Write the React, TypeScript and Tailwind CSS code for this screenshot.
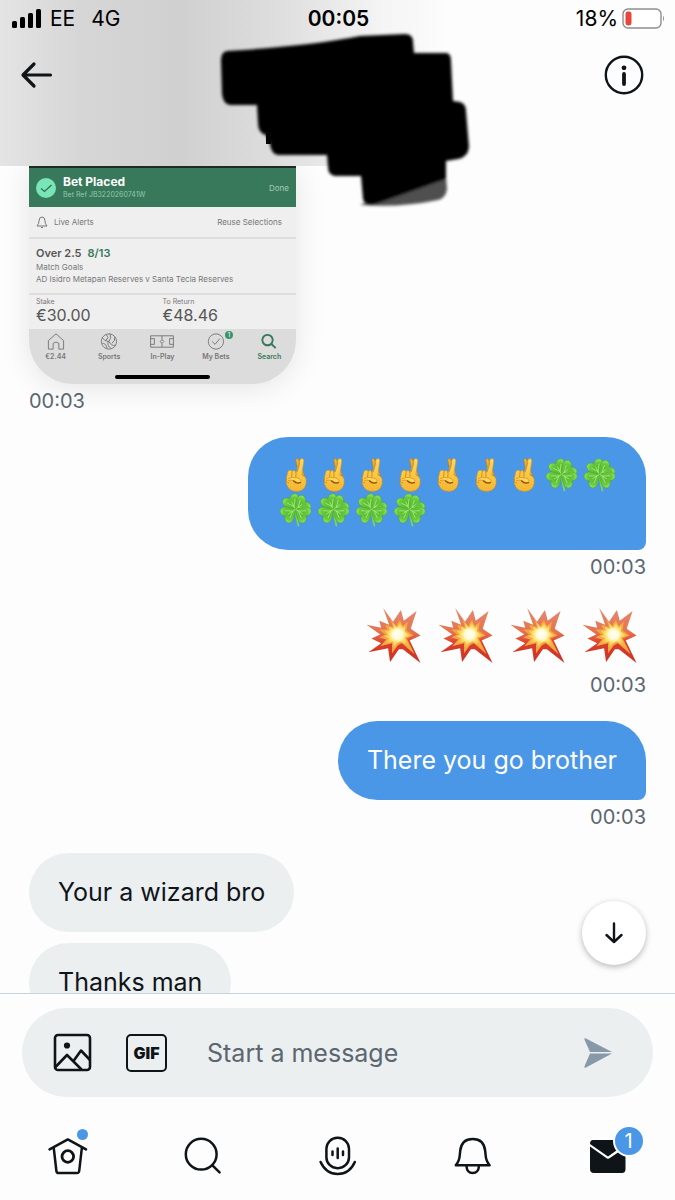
import React from 'react';

const CrossedFingers = () => (
  <svg viewBox="0 0 32 34" className="w-8 h-[34px]">
    <defs>
      <linearGradient id="skin" x1="0" y1="0" x2="0" y2="1">
        <stop offset="0" stopColor="#ffd95c" />
        <stop offset="1" stopColor="#f5b52e" />
      </linearGradient>
    </defs>
    <path d="M16.8 2.4 Q16.4 .8 17.8 .6 Q19.2 .4 19.8 2 L25.4 17 L20 18 Z" fill="#eeb033" stroke="#b87616" strokeWidth=".6" />
    <path d="M8.6 14.6 Q8.8 12.2 11 12.2 Q12.6 12 13.2 13 Q15.6 11.8 16.8 14 L17.6 13.4 L20.8 2.2 Q21.4 .4 23 .5 Q25.2 .8 24.8 3.2 L22.8 17 Q26.6 18 27.2 21.6 Q27.8 26.4 25.6 29.8 Q23 33.4 17.6 33.4 Q11.4 33.4 8.8 29 Q6.4 25.4 7.2 20.6 Z" fill="url(#skin)" stroke="#c98a22" strokeWidth=".5" />
    <path d="M7.4 21 Q6.4 24.6 9.6 24.8 M13.2 13 L12.6 19 M16.8 14 Q17.4 16 16.8 19 M20.8 4.6 Q19.6 10 18 14" fill="none" stroke="#c5821c" strokeWidth=".8" strokeLinecap="round" />
    <path d="M9.4 20.6 Q13 18.6 18 19.8 Q23 21 21.8 24.4 Q18.6 25.4 15 22.8 Q12 21.4 9.4 22.4" fill="#ffd55a" stroke="#c5821c" strokeWidth=".6" strokeLinecap="round" />
    <path d="M14.6 23 Q17.6 26 21.4 24.6" fill="none" stroke="#8f4f08" strokeWidth="1.3" strokeLinecap="round" />
  </svg>
);

const leaf = 'M0 0 C-3 -3 -8.4 -6 -7.6 -10.6 C-7 -14 -2.4 -14.4 0 -11 C2.4 -14.4 7 -14 7.6 -10.6 C8.4 -6 3 -3 0 0 Z';

const Clover = () => (
  <svg viewBox="0 0 32 34" className="w-8 h-[34px]">
    <defs>
      <radialGradient id="leafFill" cx=".5" cy=".55" r=".6">
        <stop offset="0" stopColor="#56b92f" />
        <stop offset=".65" stopColor="#68c93d" />
        <stop offset="1" stopColor="#8be05c" />
      </radialGradient>
    </defs>
    <path d="M16.6 16 Q17.6 26 19.4 32.6" fill="none" stroke="#7bd651" strokeWidth="1.8" strokeLinecap="round" />
    {[-28, 52, 122, 238].map((angle) => (
      <g key={angle} transform={`translate(16.6 16.4) rotate(${angle}) scale(1.1)`}>
        <path d={leaf} fill="url(#leafFill)" stroke="#4aa52b" strokeWidth=".5" />
        <path d="M0 0 V-8 M0 -3 L-4 -8.6 M0 -3 L4 -8.6" fill="none" stroke="#a9ea84" strokeWidth=".7" />
      </g>
    ))}
  </svg>
);

const Collision = () => (
  <svg viewBox="0 0 56 57" className="w-14 h-14">
    <defs>
      <linearGradient id="blast" x1="0" y1="0" x2="0" y2="1">
        <stop offset="0" stopColor="#e58a70" />
        <stop offset=".45" stopColor="#e5704e" />
        <stop offset=".65" stopColor="#d93f2b" />
        <stop offset="1" stopColor="#cd3024" />
      </linearGradient>
      <radialGradient id="core" cx=".52" cy=".48" r=".5">
        <stop offset="0" stopColor="#ffffff" />
        <stop offset=".35" stopColor="#fffbd8" />
        <stop offset=".6" stopColor="#fde16c" />
        <stop offset="1" stopColor="#f6b343" />
      </radialGradient>
    </defs>
    <path d="M17 0 L27 14 L35 2 L38 13 L51 3 L45 21 L55 28 L44 33 L55 56 L37 42 L33 42 L24 55 L22 41 L2 45 L15 36 L5 31 L14 27 L0 17 L15 20 L13 13 L23 17 Z" fill="url(#blast)" />
    <path d="M24 11 L30 18 L34 12 L37 18 L42 14 L41 23 L48 28 L41 31 L49 47 L36 36 L32 38 L26 46 L26 36 L14 39 L20 32 L13 30 L19 27 L13 22 L21 22 L19 17 L27 19 Z" fill="#f3a544" />
    <path d="M26 14 L31 20 L34 15 L37 20 L40 17 L39 24 L45 28 L39 30 L44 40 L35 34 L31 36 L28 41 L27 34 L18 37 L23 31 L17 29 L22 27 L18 23 L24 23 L22 19 L28 21 Z" fill="url(#core)" />
  </svg>
);

const Scribble = () => (
  <svg viewBox="0 0 264 180" className="w-[264px] h-[180px]">
    <defs>
      <filter id="soft" x="-5%" y="-5%" width="110%" height="110%">
        <feGaussianBlur stdDeviation="1.4" />
      </filter>
    </defs>
    <g filter="url(#soft)">
      <path d="M150 176 L235 136 L237 160 Q236 169 228 171 Q190 179 152 176 Z" fill="#505050" />
      <path d="M17 22 Q100 17 150 7 L195 5 Q203 5 203 13 L204 24 L237 24 Q241 25 241 32 L243 72 L250 73 Q256 75 256 82 L259 118 Q258 128 248 130 L236 132 L236 150 L166 175 Q155 178 153 170 L151 147 L125 147 Q118 146 118 138 L117 126 L68 126 Q61 125 60 115 L56 106 Q48 104 48 94 L47 76 L20 76 Q13 75 12 65 L11 31 Q11 23 17 22 Z" fill="#000" />
    </g>
    <path d="M56 103 h5 v12 h-5 Z" fill="#050505" />
  </svg>
);

const Header = () => (
  <header className="relative z-10 shrink-0 h-[166px] bg-[linear-gradient(90deg,#e3e4e3_0px,#d6d6d6_80px,#d0d0d0_180px,#dedede_280px,#f4f4f4_380px,#fdfdfd_450px)]">
    <div className="grid grid-cols-3 items-center h-[37px] pl-3 pr-[10px] text-[21px] leading-6 text-black">
      <div className="flex items-center gap-2">
        <svg viewBox="0 0 30 19" className="w-[30px] h-[19px]">
          <rect x="0" y="12" width="5" height="7" rx="1.5" />
          <rect x="8" y="8" width="5" height="11" rx="1.5" />
          <rect x="16" y="4" width="5" height="15" rx="1.5" />
          <rect x="24" y="0" width="5" height="19" rx="1.5" />
        </svg>
        <span>EE</span>
        <span className="ml-2">4G</span>
      </div>
      <span className="text-center font-semibold">00:05</span>
      <div className="flex items-center justify-end gap-1">
        <span>18%</span>
        <svg viewBox="0 0 43 21" className="w-[43px] h-[21px]" fill="none">
          <rect x="1" y="1" width="38" height="19" rx="5" fill="#fff" stroke="#8e8e90" strokeWidth="1.4" />
          <rect x="3.5" y="3.5" width="6" height="14" rx="2.4" fill="#e8453c" />
          <path d="M41 7.5 Q43 10.5 41 13.5 Z" fill="#8e8e90" />
        </svg>
      </div>
    </div>
    <div className="flex items-center justify-between h-[76px] pl-5 pr-[31px] text-[#0f1419]">
      <button aria-label="Back">
        <svg viewBox="0 0 34 28" className="w-[34px] h-7" fill="none" stroke="currentColor" strokeWidth="3.2" strokeLinecap="round" strokeLinejoin="round">
          <path d="M14 3 L3 14 L14 25 M3.5 14 H30.5" />
        </svg>
      </button>
      <button aria-label="Info">
        <svg viewBox="0 0 40 40" className="w-10 h-10" fill="none" stroke="currentColor" strokeLinecap="round">
          <circle cx="20" cy="20" r="18.2" strokeWidth="2.4" />
          <circle cx="20" cy="12.8" r="2.4" fill="currentColor" stroke="none" />
          <path d="M20 19 V29" strokeWidth="3.8" />
        </svg>
      </button>
    </div>
    <div className="absolute left-[210px] top-[29px]">
      <Scribble />
    </div>
  </header>
);

const betTabs = [
  {
    label: '€2.44',
    icon: <path d="M2 9 L10 2 L18 9 V18 H13 V12 Q10 9 7 12 V18 H2 Z" />,
  },
  {
    label: 'Sports',
    icon: <path d="M10 2 A8 8 0 1 1 9.9 2 Z M10 10 Q5 10 3 6 M10 10 Q13 6 11 2 M10 10 Q12 15 17 14 M7 3 Q11 6 6 9 M13 12 Q17 9 16 5 M9 10 Q8 15 12 17 M3 12 Q6 11 8 17" />,
  },
  {
    label: 'In-Play',
    wide: true,
    icon: <path d="M1 4 H25 V16 H1 Z M1 7 H5 V13 H1 M25 7 H21 V13 H25 M13 4 V8 M13 12 V16 M13 8 L15 10 L13 12 L11 10 Z" />,
  },
  {
    label: 'My Bets',
    badge: true,
    icon: <path d="M10 2 A8 8 0 1 1 9.9 2 Z M6 10 L9 13 L14 7" />,
  },
  {
    label: 'Search',
    active: true,
    icon: <path d="M8.5 3 A5.5 5.5 0 1 1 8.4 3 Z M12.5 12.5 L17 17" strokeWidth="2" />,
  },
];

const BetSlip = () => (
  <div className="w-[267px] overflow-hidden rounded-b-[44px] bg-[#efefef] text-[8px] leading-3 text-[#777] shadow-[0_4px_30px_rgba(0,0,0,0.10)]">
    <div className="flex items-center gap-[7px] h-[41px] px-[7px] border-t-2 border-[#1e2a24] bg-[#38795b]">
      <svg viewBox="0 0 20 20" className="w-5 h-5" fill="none">
        <circle cx="10" cy="10" r="10" fill="#78e5b6" />
        <path d="M5 10.5 L8.5 13.5 L15.5 7" stroke="#2f6d51" strokeWidth="1.3" />
      </svg>
      <div className="flex-1">
        <p className="text-[12px] leading-[14px] font-bold text-white">Bet Placed</p>
        <p className="text-[7px] text-[#93c8ae]">Bet Ref JB3220260741W</p>
      </div>
      <span className="text-[#a5cbb8]">Done</span>
    </div>
    <div className="flex items-center gap-[6px] h-8 pl-[7px] pr-[14px] border-b-2 border-[#dedede]">
      <svg viewBox="0 0 12 14" className="w-3 h-3.5" fill="none" stroke="#777">
        <path d="M1 11 Q3 9 3 6 Q3 2 6 2 Q9 2 9 6 Q9 9 11 11 Z M5 12.5 H7" />
      </svg>
      <span className="flex-1">Live Alerts</span>
      <span>Reuse Selections</span>
    </div>
    <div className="h-[54px] px-[7px] pt-[7px]">
      <p className="flex gap-[6px] text-[11px] leading-[14px] font-semibold text-[#555]">
        <span>Over 2.5</span>
        <span className="text-[#38795b]">8/13</span>
      </p>
      <p className="mt-px">Match Goals</p>
      <p>AD Isidro Metapan Reserves v Santa Tecla Reserves</p>
    </div>
    <div className="grid grid-cols-2 h-9 px-[7px] pt-[3px] border-t-2 border-[#dedede]">
      <div>
        <p className="text-[7px] leading-2">Stake</p>
        <p className="text-[16px] leading-[18px] text-[#555]">€30.00</p>
      </div>
      <div>
        <p className="text-[7px] leading-2">To Return</p>
        <p className="text-[16px] leading-[18px] text-[#555]">€48.46</p>
      </div>
    </div>
    <div className="h-[55px] pt-[3px] bg-[#dcdcdc]">
      <div className="grid grid-cols-5">
        {betTabs.map((tab) => (
          <div key={tab.label} className={tab.active ? 'flex flex-col items-center text-[#38795b]' : 'flex flex-col items-center'}>
            <div className="relative">
              <svg viewBox={tab.wide ? '0 0 26 20' : '0 0 20 20'} className={tab.wide ? 'w-[26px] h-[19px]' : 'w-5 h-[19px]'} fill="none" stroke="currentColor">
                {tab.icon}
              </svg>
              {tab.badge && (
                <span className="absolute -right-[7px] -top-px w-2 h-2 rounded-full bg-[#38956d] text-center text-[6px] leading-2 text-white">1</span>
              )}
            </div>
            <span className="text-[7px] leading-[11px] font-semibold">{tab.label}</span>
          </div>
        ))}
      </div>
      <div className="mx-auto mt-[13px] w-[95px] h-1 rounded-full bg-black" />
    </div>
  </div>
);

const luckyMessage = ['f', 'f', 'f', 'f', 'f', 'f', 'f', 'c', 'c', 'c', 'c', 'c', 'c'];

const Time = () => <time className="mt-[7px] text-[20px] leading-5 text-[#5b6671]">00:03</time>;

const Messages = () => (
  <main className="relative flex-1 min-h-0 overflow-hidden">
    <div className="flex flex-col gap-[26px] px-[29px]">
      <div className="flex flex-col items-start">
        <BetSlip />
        <Time />
      </div>
      <div className="flex flex-col items-end">
        <div className="flex flex-wrap max-w-[398px] px-7 pt-[21px] pb-[22px] rounded-[40px] rounded-br-lg bg-[#4a97e8]">
          {luckyMessage.map((kind, i) => (
            <span key={i} className="flex justify-center w-[38px] h-[35px]">
              {kind === 'f' ? <CrossedFingers /> : <Clover />}
            </span>
          ))}
        </div>
        <Time />
      </div>
      <div className="flex flex-col items-end">
        <div className="flex">
          {[0, 1, 2, 3].map((i) => (
            <span key={i} className="flex items-center justify-center w-[72px] h-[65px]">
              <Collision />
            </span>
          ))}
        </div>
        <Time />
      </div>
      <div className="flex flex-col items-end">
        <p className="px-[29px] py-[23px] rounded-[40px] rounded-br-lg bg-[#4a97e8] text-[25px] leading-[33px] text-white">There you go brother</p>
        <Time />
      </div>
      <div className="flex flex-col items-start gap-[11px] text-[25px] leading-[33px] text-[#0f1419]">
        <p className="px-[29px] py-[23px] rounded-[40px] bg-[#ebeff0]">Your a wizard bro</p>
        <p className="px-[29px] py-[23px] rounded-[40px] bg-[#ebeff0]">Thanks man</p>
      </div>
    </div>
    <button aria-label="Scroll down" className="absolute right-[29px] bottom-7 flex items-center justify-center w-16 h-16 rounded-full bg-white shadow-[0_2px_6px_rgba(0,0,0,0.28)]">
      <svg viewBox="0 0 18 22" className="w-[18px] h-[22px]" fill="none" stroke="#0f1419" strokeWidth="2.4" strokeLinecap="round" strokeLinejoin="round">
        <path d="M9 1.5 V20 M1.5 13 L9 20 L16.5 13" />
      </svg>
    </button>
  </main>
);

const Composer = () => (
  <form className="shrink-0 px-[22px] pt-[14px] border-t border-[#c9d3da]">
    <div className="flex items-center h-[89px] pl-[31px] pr-10 rounded-full bg-[#ebeff0] text-[#0f1419]">
      <button type="button" aria-label="Photo">
        <svg viewBox="0 0 39 39" className="w-[39px] h-[39px]" fill="none" stroke="currentColor" strokeWidth="2.6" strokeLinejoin="round">
          <rect x="2" y="2" width="35" height="35" rx="3" />
          <circle cx="14" cy="12.5" r="3.1" fill="currentColor" stroke="none" />
          <path d="M2.5 34 L14 22 L28.5 36.5 M20.5 28 L28 17.5 L37 27" />
        </svg>
      </button>
      <button type="button" className="ml-[34px] w-[41px] h-[38px] rounded-[5px] border-[2px] border-current text-[16px] leading-5 font-black">GIF</button>
      <input aria-label="Start a message" placeholder="Start a message" className="ml-10 flex-1 min-w-0 bg-transparent text-[25px] leading-8 outline-none placeholder:text-[#5b6671]" />
      <button type="button" aria-label="Send">
        <svg viewBox="0 0 30 32" className="w-[30px] h-8" fill="#8799a8">
          <path d="M1.4 2.6 Q1.2 .6 3 1.4 L29 15 H8.2 L7 15 Z M1.4 29.4 Q1.2 31.4 3 30.6 L29 16.6 H8.2 L7 16.6 Z" />
        </svg>
      </button>
    </div>
  </form>
);

const Nav = () => (
  <nav className="shrink-0 grid grid-cols-5 h-[103px] pt-[39px] text-[#0f1419]">
    <a href="#home" aria-label="Home" className="relative justify-self-center w-10 h-10">
      <svg viewBox="0 0 40 40" className="w-10 h-10" fill="none" stroke="currentColor" strokeWidth="2.5" strokeLinecap="round" strokeLinejoin="round">
        <path d="M1.6 13.4 L19.8 3.4 L38 13.4 M5.8 12.4 L8.4 35 Q8.6 37 10.6 37 H29 Q31 37 31.2 35 L33.8 12.4" />
        <circle cx="19.8" cy="20.5" r="5.8" strokeWidth="2.8" />
      </svg>
      <span className="absolute -top-[7px] right-0 w-[11px] h-[11px] rounded-full bg-[#4a97e8]" />
    </a>
    <a href="#search" aria-label="Search" className="justify-self-center w-10 h-10">
      <svg viewBox="0 0 40 40" className="w-10 h-10" fill="none" stroke="currentColor" strokeWidth="2.5" strokeLinecap="round">
        <circle cx="18.2" cy="18.2" r="15.4" />
        <path d="M29.4 29.4 L36.6 36.4" />
      </svg>
    </a>
    <a href="#spaces" aria-label="Spaces" className="justify-self-center w-10 h-10">
      <svg viewBox="0 0 40 40" className="w-10 h-10" fill="none" stroke="currentColor" strokeWidth="2.5" strokeLinecap="round">
        <rect x="8.4" y="1.8" width="22.6" height="30.4" rx="11" />
        <path d="M14.5 15.5 V19 M19.7 12.5 V22 M25 15.5 V19 M2.6 26 Q8 38 19.7 38 Q31.6 38 36.8 26" />
      </svg>
    </a>
    <a href="#notifications" aria-label="Notifications" className="justify-self-center w-10 h-10">
      <svg viewBox="0 0 40 40" className="w-10 h-10" fill="none" stroke="currentColor" strokeWidth="2.5" strokeLinecap="round" strokeLinejoin="round">
        <path d="M2.8 29.3 Q6.4 25 6.8 19 L7.2 15 Q8.4 3 19.7 3 Q31 3 32.2 15 L32.6 19 Q33 25 36.6 29.3 Z M13.4 30 Q14 37 19.7 37 Q25.4 37 26 30" />
      </svg>
    </a>
    <a href="#messages" aria-label="Messages" className="relative justify-self-center w-10 h-10">
      <svg viewBox="0 0 40 40" className="w-10 h-10" fill="currentColor">
        <path d="M2 8 Q2 4 5 4 H34 Q37.5 4 37.5 8 L20 20.6 Z" />
        <path d="M2 10.6 L19 22.4 Q20 23 21 22.4 L37.5 11.4 V33 Q37.5 37 34 37 H6 Q2 37 2 33 Z" />
      </svg>
      <span className="absolute -top-[11px] -right-[17px] w-8 h-8 rounded-full border-2 border-[#fdfdfd] bg-[#4a97e8] text-center text-[20px] leading-7 text-white">1</span>
    </a>
  </nav>
);

export default function App() {
  return (
    <div className="flex flex-col h-screen bg-[#fdfdfd] font-['Inter','Liberation_Sans',sans-serif]">
      <Header />
      <Messages />
      <Composer />
      <Nav />
    </div>
  );
}
